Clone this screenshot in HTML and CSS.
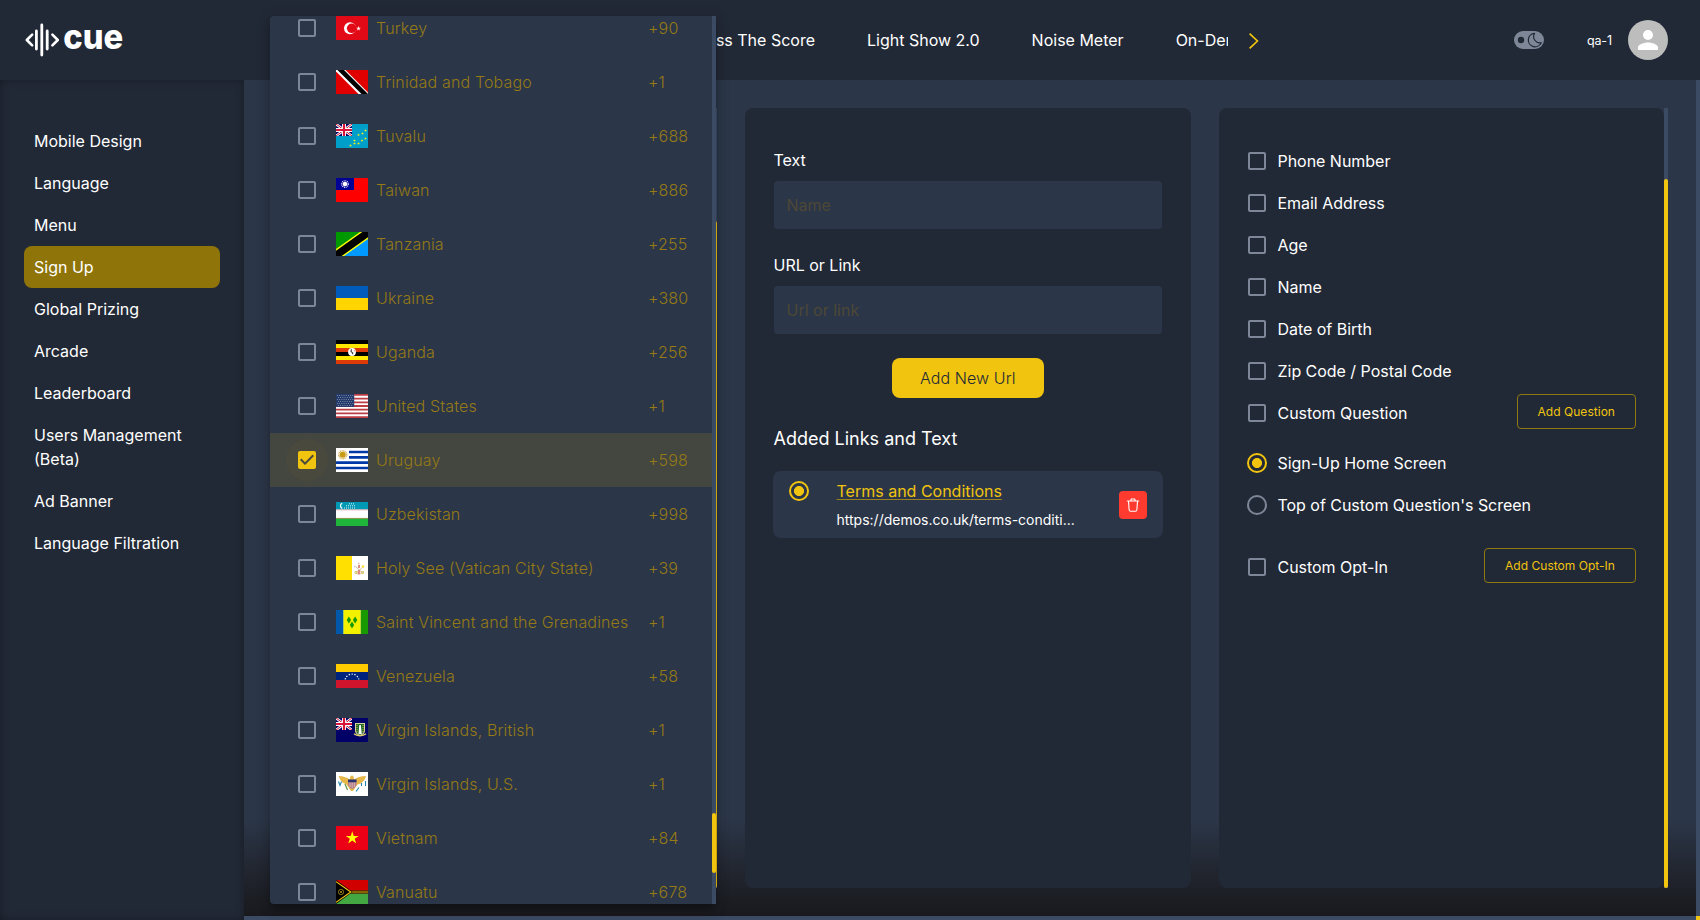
FILE: index.html
```html
<!DOCTYPE html>
<html lang="en">
<head>
<meta charset="utf-8">
<title>Cue - Sign Up</title>
<link rel="stylesheet" href="styles.css">
</head>
<body>
<svg class="defs" aria-hidden="true">
  <symbol id="jack" viewBox="0 0 16 12">
    <path fill="#006" d="M0 0h16v12H0z"/>
    <path stroke="#fff" stroke-width="2.6" d="M0 0l16 12M16 0L0 12"/>
    <path stroke="#c8102e" stroke-width="1" d="M0 0l16 12M16 0L0 12"/>
    <path stroke="#fff" stroke-width="4" d="M8 0v12M0 6h16"/>
    <path stroke="#d8143a" stroke-width="2.2" d="M8 0v12M0 6h16"/>
  </symbol>
  <symbol id="star" viewBox="-10 -10 20 20">
    <path d="M0-10L2.25-3.1H9.5L3.6 1.2 5.9 8.1 0 3.8-5.9 8.1-3.6 1.2-9.5-3.1H-2.25z"/>
  </symbol>
</svg>

<header class="topbar">
  <div class="logo">
    <svg width="110" height="40" viewBox="0 0 110 40">
      <g fill="none" stroke="#fff" stroke-width="2.6" stroke-linecap="round">
        <path stroke-linejoin="round" d="M8.2 14.6L2.8 20l5.4 5.4M28.4 14.6l5.4 5.4-5.4 5.4"/>
        <path stroke-width="2.8" d="M12.4 11v18M17.8 5v30M23.2 11v18"/>
      </g>
      <text class="logo-word" x="39.3" y="29.200" textLength="60" lengthAdjust="spacingAndGlyphs">cue</text>
    </svg>
  </div>
  <nav class="tabs">
    <span class="tab tab-first">Guess The Score</span>
    <span class="tab">Light Show 2.0</span>
    <span class="tab">Noise Meter</span>
    <span class="tab">On-Demand</span>
  </nav>
  <svg class="next" width="12" height="18" viewBox="0 0 12 18"><path fill="none" stroke="#f1c40f" stroke-width="1.7" d="M1.600 1.600L9.400 9l-7.800 7.400"/></svg>
  <div class="account">
    <svg class="mode" width="30" height="18" viewBox="0 0 30 18">
      <rect width="30" height="18" rx="9" fill="#7d8797"/>
      <circle cx="7" cy="9" r="3.2" fill="#222936"/>
      <path fill="none" stroke="#222936" stroke-width="1.2" stroke-linejoin="round" d="M20.600 2.400a6.700 6.700 0 1 0 6.600 9.300 6.200 6.200 0 0 1-6.600-9.300z"/>
    </svg>
    <span class="user">qa-1</span>
    <svg class="avatar" width="40" height="40" viewBox="0 0 40 40"><circle cx="20" cy="20" r="20" fill="#bdbdbd"/><path fill="#fff" d="M20 20a5 5 0 1 0 0-10 5 5 0 0 0 0 10zm0 2.5c-3.340 0-10 1.670-10 5V30h20v-2.500c0-3.330-6.660-5-10-5z"/></svg>
  </div>
</header>

<div class="body">
  <aside class="sidebar">
    <a class="side-item">Mobile Design</a>
    <a class="side-item">Language</a>
    <a class="side-item">Menu</a>
    <a class="side-item active">Sign Up</a>
    <a class="side-item">Global Prizing</a>
    <a class="side-item">Arcade</a>
    <a class="side-item">Leaderboard</a>
    <a class="side-item">Users Management (Beta)</a>
    <a class="side-item">Ad Banner</a>
    <a class="side-item">Language Filtration</a>
  </aside>
  <main class="stage">
    <div class="board">
      <section class="column col-a"><div class="panel"></div><div class="track"><div class="thumb"></div></div></section>
      <section class="panel col-b">
        <label class="label">Text</label>
        <div class="input">Name</div>
        <label class="label">URL or Link</label>
        <div class="input">Url or link</div>
        <button class="primary">Add New Url</button>
        <h2 class="heading">Added Links and Text</h2>
        <div class="link-card">
          <span class="radio on"></span>
          <div class="link-text"><a class="link-title">Terms and Conditions</a><span class="link-url">https://demos.co.uk/terms-conditi...</span></div>
          <button class="trash"><svg width="14" height="16" viewBox="0 0 14 16"><g fill="none" stroke="#fff" stroke-width="1.1" stroke-linejoin="round" stroke-linecap="round"><path d="M1.300 4h11.400M4.600 4L5.300 2h3.400L9.400 4M2.500 4.200l.6 8.600c.1 1 .6 1.500 1.500 1.500h4.800c.9 0 1.400-.5 1.500-1.500l.6-8.600"/></g></svg></button>
        </div>
      </section>
      <section class="column col-c">
        <div class="panel options">
          <div class="option"><span class="box"></span>Phone Number</div>
          <div class="option"><span class="box"></span>Email Address</div>
          <div class="option"><span class="box"></span>Age</div>
          <div class="option"><span class="box"></span>Name</div>
          <div class="option"><span class="box"></span>Date of Birth</div>
          <div class="option"><span class="box"></span>Zip Code / Postal Code</div>
          <div class="option"><span class="box"></span>Custom Question<button class="outline">Add Question</button></div>
          <div class="option radio-first"><span class="radio on"></span>Sign-Up Home Screen</div>
          <div class="option"><span class="radio"></span>Top of Custom Question's Screen</div>
          <div class="option opt-in"><span class="box"></span>Custom Opt-In<button class="outline">Add Custom Opt-In</button></div>
        </div>
        <div class="track"><div class="thumb"></div></div>
      </section>
    </div>
    <div class="page-track-x"></div>
  </main>
  <div class="page-track-y"><div class="corner"></div></div>
</div>

<div class="popup">
  <div class="countries">
    <div class="row"><span class="box"></span><svg class="flag" viewBox="0 0 32 24"><path fill="#e30a17" d="M0 0h32v24H0z"/><circle cx="14" cy="12.300" r="6" fill="#fff"/><circle cx="15.700" cy="12.300" r="4.800" fill="#e30a17"/><use href="#star" x="20" y="10" width="5" height="5" fill="#fff"/></svg><span class="name">Turkey</span><span class="code">+90</span></div>
    <div class="row"><span class="box"></span><svg class="flag" viewBox="0 0 32 24"><path fill="#e00000" d="M0 0h32v24H0z"/><path fill="#fff" d="M0 0h9.500L32 22.500V24H22.500L0 1.500z"/><path fill="#000" d="M1.500 0H8l24 24h-6.500z"/></svg><span class="name">Trinidad and Tobago</span><span class="code">+1</span></div>
    <div class="row"><span class="box"></span><svg class="flag" viewBox="0 0 32 24"><path fill="#009fca" d="M0 0h32v24H0z"/><use href="#jack" width="16" height="12"/><g fill="#fff40d"><use href="#star" x="28" y="5" width="3" height="3"/><use href="#star" x="25" y="8" width="3" height="3"/><use href="#star" x="21" y="9.500" width="3" height="3"/><use href="#star" x="28" y="13" width="3" height="3"/><use href="#star" x="24.500" y="15" width="3" height="3"/><use href="#star" x="17" y="15" width="3" height="3"/><use href="#star" x="21" y="18" width="3" height="3"/><use href="#star" x="17" y="18" width="3" height="3"/><use href="#star" x="13" y="20" width="3" height="3"/></g></svg><span class="name">Tuvalu</span><span class="code">+688</span></div>
    <div class="row"><span class="box"></span><svg class="flag" viewBox="0 0 32 24"><path fill="#f00" d="M0 0h32v24H0z"/><path fill="#000095" d="M0 0h18v12H0z"/><circle cx="9" cy="6" r="2.300" fill="#fff"/><circle cx="9" cy="6" r="3.300" fill="none" stroke="#fff" stroke-width="1.200" stroke-dasharray=".9 .83"/></svg><span class="name">Taiwan</span><span class="code">+886</span></div>
    <div class="row"><span class="box"></span><svg class="flag" viewBox="0 0 32 24"><path fill="#090" d="M0 0h32v24H0z"/><path fill="#09f" d="M32 0v24H0z"/><path stroke="#ff0" stroke-width="10.400" d="M-4 26.200L36-2.200"/><path stroke="#000" stroke-width="7.600" d="M-4 26.200L36-2.200"/></svg><span class="name">Tanzania</span><span class="code">+255</span></div>
    <div class="row"><span class="box"></span><svg class="flag" viewBox="0 0 32 24"><path fill="#005bbb" d="M0 0h32v12H0z"/><path fill="#ffd500" d="M0 12h32v12H0z"/></svg><span class="name">Ukraine</span><span class="code">+380</span></div>
    <div class="row"><span class="box"></span><svg class="flag" viewBox="0 0 32 24"><path fill="#000" d="M0 0h32v24H0z"/><path fill="#ffe700" d="M0 4h32v4H0zM0 16h32v4H0z"/><path fill="#de3908" d="M0 8h32v4H0zM0 20h32v4H0z"/><circle cx="16" cy="12" r="3.900" fill="#fff"/><path fill="#444" d="M15 8.800l1 .9-.3 1.800 1.700 1.200-.3 1.600h-1l-.5-1.800-1.200-.5z"/><path fill="#de3908" d="M17.600 10l1.200.7-.5 1z"/></svg><span class="name">Uganda</span><span class="code">+256</span></div>
    <div class="row"><span class="box"></span><svg class="flag" viewBox="0 0 32 24"><path fill="#fff" d="M0 0h32v24H0z"/><path stroke="#bd3d44" stroke-width="1.850" d="M0 .92h32M0 4.620h32M0 8.310h32M0 12h32M0 15.690h32M0 19.380h32M0 23.080h32"/><path fill="#233a6b" d="M0 0h18.200v12.900H0z"/><path stroke="#8d9bb8" stroke-width=".9" stroke-dasharray=".9 1.300" d="M1 1.500h16.500M2 3.500h15.500M1 5.500h16.500M2 7.500h15.500M1 9.500h16.500M2 11.500h15.500"/></svg><span class="name">United States</span><span class="code">+1</span></div>
    <div class="row selected"><span class="box checked"><svg width="18" height="18" viewBox="3 3 18 18"><path fill="#f1c40f" d="M19 3H5a2 2 0 0 0-2 2v14a2 2 0 0 0 2 2h14a2 2 0 0 0 2-2V5a2 2 0 0 0-2-2zm-9 14l-5-5 1.410-1.410L10 14.170l7.590-7.590L19 8l-9 9z"/></svg></span><svg class="flag" viewBox="0 0 32 24"><path fill="#fff" d="M0 0h32v24H0z"/><path stroke="#0038a8" stroke-width="2.670" d="M13 4h19M13 9.300h19M0 14.700h32M0 20h32"/><circle cx="6.700" cy="6.700" r="4" fill="none" stroke="#d6b765" stroke-width="1.600" stroke-dasharray="1 .57"/><circle cx="6.700" cy="6.700" r="3" fill="#c99a14"/></svg><span class="name">Uruguay</span><span class="code">+598</span></div>
    <div class="row"><span class="box"></span><svg class="flag" viewBox="0 0 32 24"><path fill="#fff" d="M0 0h32v24H0z"/><path fill="#0099b5" d="M0 0h32v7.500H0z"/><path fill="#1eb53a" d="M0 16.500h32V24H0z"/><path fill="#e8a1a7" d="M0 7.500h32v.8H0z"/><path fill="#8a8338" d="M0 15.900h32v.8H0z"/><path fill="none" stroke="#fff" stroke-width="1.200" d="M6.300 1.300c-2.400.5-2.400 4.500 0 5"/><path stroke="#d5f1f5" stroke-width="1" stroke-dasharray="1 1" d="M13 1.800h6M10 3.800h9M8 6h11"/></svg><span class="name">Uzbekistan</span><span class="code">+998</span></div>
    <div class="row"><span class="box"></span><svg class="flag" viewBox="0 0 32 24"><path fill="#fff" d="M0 0h32v24H0z"/><path fill="#ffe000" d="M0 0h16v24H0z"/><path fill="none" stroke="#d3c0a0" stroke-width="1" d="M20 11l7 6M27 11l-7 6"/><circle cx="19" cy="10.500" r="1.100" fill="#d5d5d5"/><circle cx="27" cy="10.500" r="1.300" fill="#ffe02e"/><path fill="#dd8c82" d="M22 9h2v3h-2zM22 14h2l.5 4.500h-3z"/><path fill="none" stroke="#dacb70" d="M19 15.500h2v2h-2zM25.500 15.500h2v2h-2z"/><path fill="#e9c9a3" d="M22 6.500h1.500v2H22z"/></svg><span class="name">Holy See (Vatican City State)</span><span class="code">+39</span></div>
    <div class="row"><span class="box"></span><svg class="flag" viewBox="0 0 32 24"><path fill="#0058aa" d="M0 0h7.200v24H0z"/><path fill="#f4f100" d="M7.200 0H25v24H7.200z"/><path fill="#a9ca55" d="M7 0h1v24H7zM24.300 0h.9v24h-.9z"/><path fill="#199a00" d="M25 0h7v24h-7zM12.900 6.500l2.200 3.500-2.200 3.500-2.200-3.500zM19.100 6.500l2.200 3.500-2.200 3.500-2.200-3.500zM16 11.500l2.200 3.500-2.200 3.500-2.200-3.500z"/></svg><span class="name">Saint Vincent and the Grenadines</span><span class="code">+1</span></div>
    <div class="row"><span class="box"></span><svg class="flag" viewBox="0 0 32 24"><path fill="#fc0" d="M0 0h32v8H0z"/><path fill="#00247d" d="M0 8h32v8H0z"/><path fill="#cf142b" d="M0 16h32v8H0z"/><path fill="none" stroke="#fff" stroke-width="1.300" stroke-dasharray="1.200 1.700" d="M9.200 15.400a7 7 0 0 1 13.600 0"/></svg><span class="name">Venezuela</span><span class="code">+58</span></div>
    <div class="row"><span class="box"></span><svg class="flag" viewBox="0 0 32 24"><path fill="#006" d="M0 0h32v24H0z"/><use href="#jack" width="16" height="12"/><path fill="#d8d39b" d="M19 5h10v7.500c0 3-2.500 4.500-5 5.500-2.500-1-5-2.500-5-5.500z"/><path fill="#23692b" d="M20 6h8v6.500c0 2-1.800 3.500-4 4.500-2.200-1-4-2.500-4-4.500z"/><path fill="#fff" d="M23.300 7h1.500l1 9h-3.300z"/><path stroke="#e2c350" stroke-width=".9" stroke-dasharray="1 1" d="M21 7v7M27 7v7"/><path fill="none" stroke="#e5cf72" stroke-width="1.500" d="M18 15.700c3 2.600 9 2.600 12 0"/></svg><span class="name">Virgin Islands, British</span><span class="code">+1</span></div>
    <div class="row"><span class="box"></span><svg class="flag" viewBox="0 0 32 24"><path fill="#fff" d="M0 0h32v24H0z"/><path fill="#e6b84a" d="M2.800 4c4 .3 8 1 11 3.500l.5-3c1-1.300 2.500-1.300 3.200 0l.5 3c3-2.500 7-3.200 12-3.500-1 4.500-4 7.500-8.500 8.500L17 19h-2l-4.500-6.500C6 11 3.800 8 2.800 4z"/><path fill="#b77c83" d="M12 8h8.500v4c0 2.500-2 4-4.200 5C14 16 12 14.500 12 12z"/><path fill="#2a3570" d="M12 7.600h8.500v2.600H12z"/><path stroke="#eee" stroke-width=".5" d="M14 10.500V15M16.200 10.500V16M18.400 10.500V15"/><path fill="none" stroke="#2486ad" stroke-width="1.100" d="M2.500 9.500l1.500 4 1.500-4M29.500 9v5M25.500 11v3M23 15.500l-3 4"/><path fill="none" stroke="#6b9a50" stroke-width="1.300" d="M9 12l2.500 6"/></svg><span class="name">Virgin Islands, U.S.</span><span class="code">+1</span></div>
    <div class="row"><span class="box"></span><svg class="flag" viewBox="0 0 32 24"><path fill="#ec0015" d="M0 0h32v24H0z"/><use href="#star" x="9.500" y="5" width="13.500" height="14" fill="#ff0"/></svg><span class="name">Vietnam</span><span class="code">+84</span></div>
    <div class="row"><span class="box"></span><svg class="flag" viewBox="0 0 32 24"><path fill="#d00000" d="M0 0h32v12H0z"/><path fill="#43a742" d="M0 12h32v12H0z"/><path stroke="#4d2c00" stroke-width="3.400" d="M14 12h18"/><path stroke="#9c7a08" stroke-width="1.700" d="M14 12h18"/><path fill="#000" d="M0 0l16.500 12L0 24z"/><path fill="none" stroke="#fdce12" stroke-width="1.100" d="M0 1.600L14.800 12 0 22.400"/><circle cx="5" cy="12" r="2.700" fill="none" stroke="#9c8520" stroke-width=".8"/><path stroke="#9c8520" stroke-width=".9" d="M3.600 13.400l2.800-2.800M3.600 10.600l2.800 2.800"/></svg><span class="name">Vanuatu</span><span class="code">+678</span></div>
  </div>
  <div class="track"><div class="thumb"></div></div>
</div>
</body>
</html>
```

FILE: styles.css
```css
* { box-sizing: border-box; }

body {
  margin: 0;
  width: 1700px;
  height: 920px;
  overflow: hidden;
  position: relative;
  display: flex;
  flex-direction: column;
  background: #222936;
  color: #fff;
  font: 400 16px/24px Inter, "Liberation Sans", sans-serif;
}

button { font: inherit; padding: 0; border: 0; }
.defs { position: absolute; width: 0; height: 0; }

/* Top bar */
.topbar {
  flex: none;
  height: 80px;
  display: flex;
  align-items: center;
  padding: 0 32px 0 24px;
  background: #222936;
}
.logo { width: 246px; height: 40px; }
.logo svg { display: block; overflow: visible; }
.logo-word { font: 800 34px Inter, sans-serif; fill: #fff; }
.tabs {
  width: 958px;
  display: flex;
  gap: 52px;
  overflow: hidden;
  white-space: nowrap;
}
.tab { flex: none; }
.tab-first { width: 545px; text-align: right; }
.next { margin-left: 20px; margin-top: 1px; }
.account { margin-left: auto; display: flex; align-items: center; }
.user { margin: 0 16px 0 43px; font-size: 12.5px; letter-spacing: -.1px; padding-top: 1px; }

/* Page body */
.body { flex: 1; display: flex; min-height: 0; }
.sidebar {
  width: 244px;
  padding: 40px 24px;
  box-shadow: inset 0 0 10px rgba(0, 0, 0, .3);
}
.side-item { display: block; padding: 9px 10px; border-radius: 8px; }
.side-item.active { background: #8f740a; }

.stage {
  width: 1452px;
  display: flex;
  flex-direction: column;
  background: linear-gradient(#2b3648 0, #2b3648 740px, #222630 790px, #19191d 836px);
}
.board { flex: 1; display: flex; padding: 28px 28px 28px 26px; }
.page-track-x { height: 4px; background: #3c4b64; }
.page-track-y { width: 4px; background: #3c4b64; display: flex; align-items: flex-end; }
.corner { width: 4px; height: 4px; background: #f1c40f; }

.panel { background: #222936; border-radius: 8px; }
.column { display: flex; }
.column .panel { flex: 1; }
.track { width: 4px; background: #3c4b64; }
.thumb { background: #f1c40f; border-radius: 2px; }
.col-a { width: 447px; }
.col-a .thumb { margin-top: 113px; height: 667px; }
.col-b {
  width: 446px;
  margin: 0 28px;
  padding: 40px 29px 0 28.5px;
  display: flex;
  flex-direction: column;
}
.col-c { width: 449px; }
.col-c .thumb { margin-top: 71px; height: 709px; }

/* Links form */
.label { height: 33px; }
.input {
  height: 48px;
  margin-bottom: 24px;
  padding: 12px 13px;
  width: 388.500px;
  border-radius: 4px;
  background: #2b3648;
  color: #4d4836;
}
.primary {
  align-self: center;
  width: 152px;
  height: 40px;
  border-radius: 8px;
  background: #f1c40f;
  color: #222936;
  font-weight: 300;
  letter-spacing: .1px;
}
.heading { margin: 28px 0 0; font-size: 18px; line-height: 26px; font-weight: 400; }
.link-card {
  display: flex;
  margin: 19px 0 0 -.5px;
  width: 390px;
  height: 67px;
  padding: 10px 16px 0;
  border-radius: 8px;
  background: #2b3648;
}
.link-text { margin: -2px 0 0 27.5px; width: 282.5px; display: flex; flex-direction: column; }
.link-title { color: #f1c40f; text-decoration: underline; text-decoration-color: #9a8120; text-underline-offset: 2px; text-decoration-thickness: 1px; }
.link-url { margin-top: 5px; font-size: 14px; }
.trash {
  width: 28px;
  height: 28px;
  margin-top: 10px;
  border-radius: 4px;
  background: #ff3b30;
  display: grid;
  place-items: center;
}

/* Controls */
.box {
  flex: none;
  width: 18px;
  height: 18px;
  border: 2px solid #7d8797;
  border-radius: 2px;
}
.radio {
  flex: none;
  width: 20px;
  height: 20px;
  border: 2px solid #7d8797;
  border-radius: 50%;
}
.radio.on { border-color: #f1c40f; background: radial-gradient(circle, #f1c40f 4.700px, transparent 5.300px); }

/* Options */
.options { padding: 32px 28px 0 29px; }
.option { height: 42px; display: flex; align-items: center; letter-spacing: -.03px; }
.option .box { margin-right: 11.500px; }
.option .radio { margin: 0 10.500px 0 -1px; }
.outline {
  margin: -4px 0 0 auto;
  height: 35px;
  padding: 0 20px;
  border: 1px solid #8f780f;
  border-radius: 4px;
  background: none;
  color: #f1c40f;
  font-size: 12px;
  line-height: 33px;
  letter-spacing: .03px;
}
.radio-first { margin-top: 8px; }
.opt-in { margin-top: 20px; }

/* Country picker */
.popup {
  position: absolute;
  left: 270px;
  top: 16px;
  width: 446px;
  height: 888px;
  display: flex;
  overflow: hidden;
  border-radius: 4px 0 0 4px;
  background: #2b3648;
  box-shadow: 0 5px 5px -3px rgba(0, 0, 0, .2), 0 8px 10px 1px rgba(0, 0, 0, .14), 0 3px 14px 2px rgba(0, 0, 0, .12);
}
.countries { width: 442px; margin-top: -15px; }
.row {
  height: 54px;
  padding-left: 28px;
  display: flex;
  align-items: center;
  color: #957a16;
  font-weight: 300;
  letter-spacing: .15px;
}
.row.selected { background: #444640; }
.flag { width: 32px; height: 24px; margin: 0 8px 0 20px; }
.name { width: 272px; }
.checked { border: 0; position: relative; }
.checked::before {
  content: "";
  position: absolute;
  inset: -12px;
  border-radius: 50%;
  background: #4a493d;
}
.checked svg { display: block; position: relative; }
.popup .thumb { margin-top: 797px; height: 60px; }
```
